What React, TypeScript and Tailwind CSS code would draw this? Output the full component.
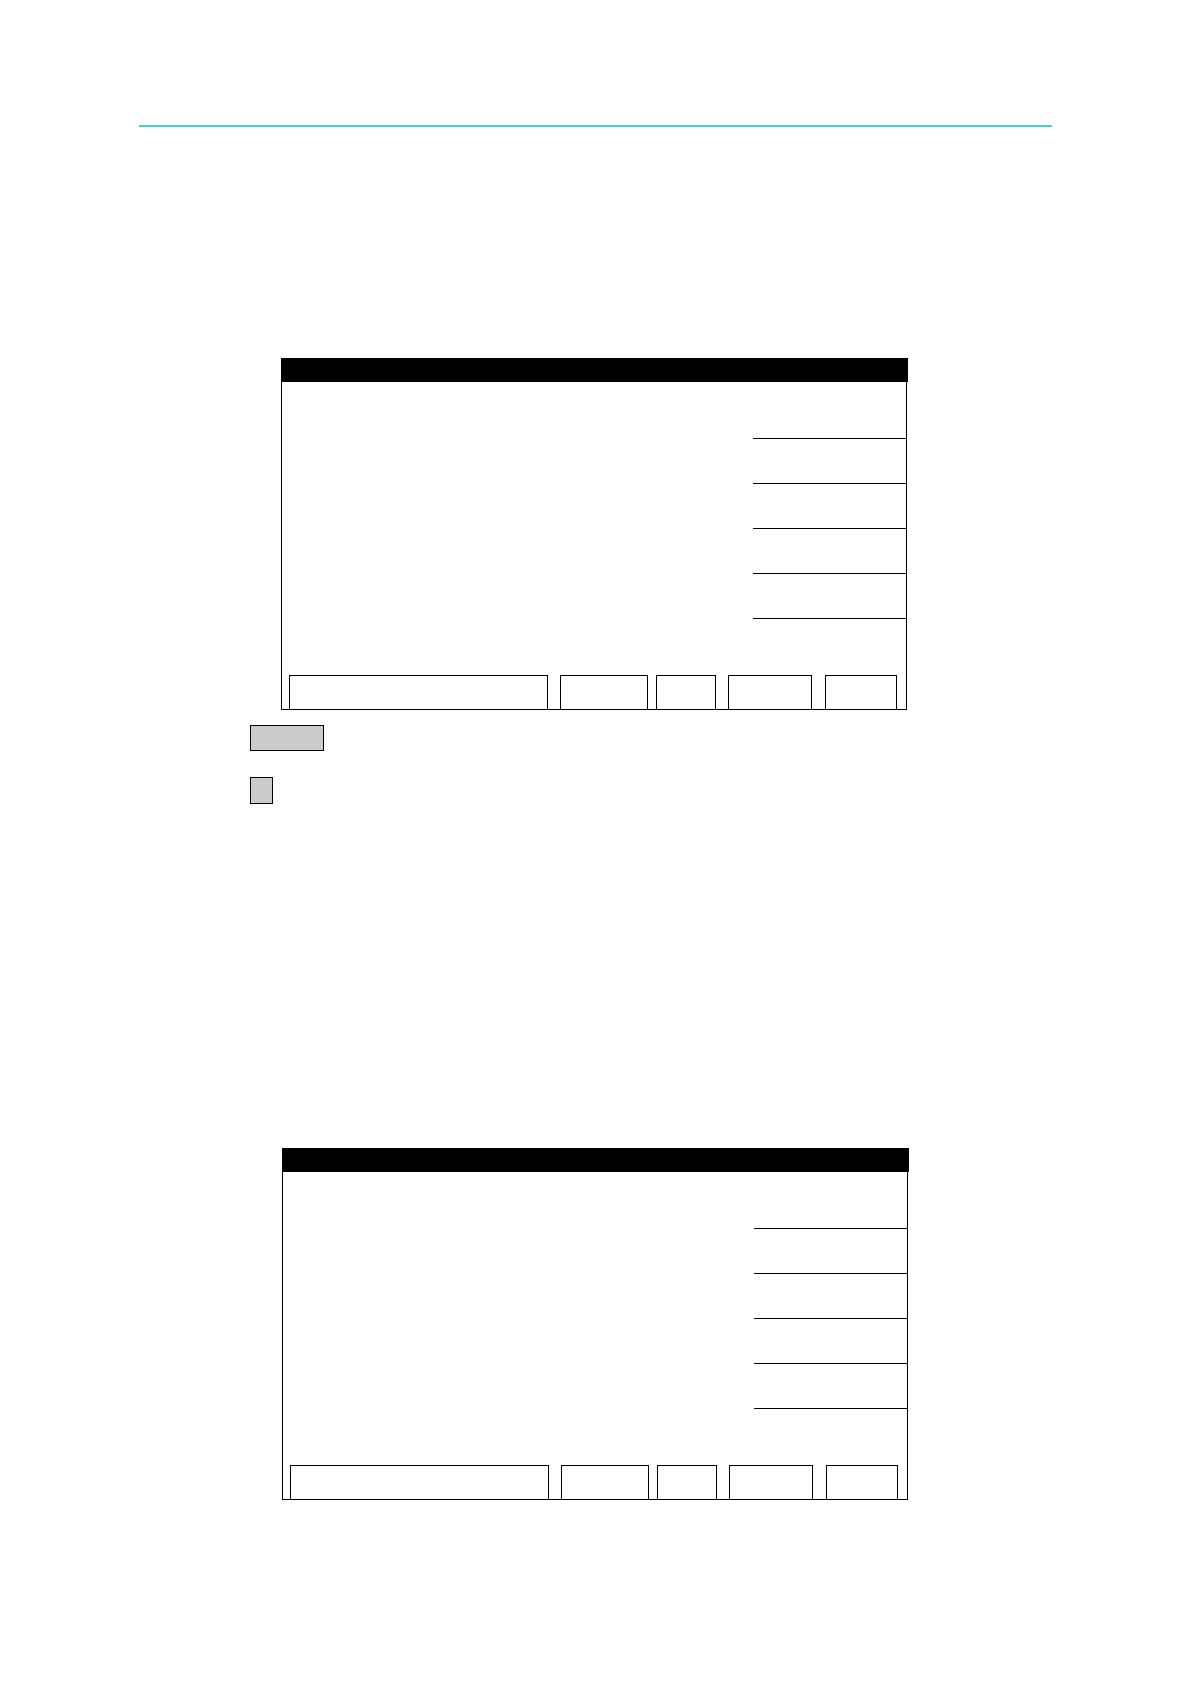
import React from 'react'

// widths and gaps of the soft-key boxes along the bottom of each screen
const softKeys = [
  { w: 259, gap: 6.5 },
  { w: 88, gap: 12 },
  { w: 60, gap: 8 },
  { w: 84, gap: 12 },
  { w: 72, gap: 13 },
]

function ScreenFrame({ left }: { left: string }) {
  return (
    <div className={`${left} w-[626px] h-[352px] flex flex-col border-x-[1.5px] border-b-[1.5px] border-black bg-white`}>
      <div className="h-[23.5px] -mx-[1.5px] bg-black" />
      <div className="flex-1 flex">
        <div className="flex-1" />
        <div className="w-[153.5px] pt-[56.5px]">
          <div className="h-[45px] border-t-[1.5px] border-black" />
          <div className="h-[45px] border-t-[1.5px] border-black" />
          <div className="h-[45px] border-t-[1.5px] border-black" />
          <div className="h-[45px] border-t-[1.5px] border-black" />
          <div className="border-t-[1.5px] border-black" />
        </div>
      </div>
      <div className="h-[34px] flex">
        {softKeys.map((k, i) => (
          <div
            key={i}
            className="h-full border-x-[1.5px] border-t-[1.5px] border-black"
            style={{ width: k.w, marginLeft: k.gap }}
          />
        ))}
      </div>
    </div>
  )
}

export default function App() {
  return (
    <div className="w-[1191px] h-[1684px] bg-white overflow-hidden flex flex-col">
      <div className="mt-[125px] ml-[139px] w-[913px] h-[1.5px] bg-[#55c8c8]" />

      <div className="mt-[231.5px]">
        <ScreenFrame left="ml-[281px]" />
      </div>

      <div className="mt-[15px] ml-[250px] w-[74px] h-[26px] bg-[#cccccc] border-[1.5px] border-black" />
      <div className="mt-[26px] ml-[250px] w-[23px] h-[27px] bg-[#cccccc] border-[1.5px] border-black" />

      <div className="mt-[344px]">
        <ScreenFrame left="ml-[282px]" />
      </div>
    </div>
  )
}
